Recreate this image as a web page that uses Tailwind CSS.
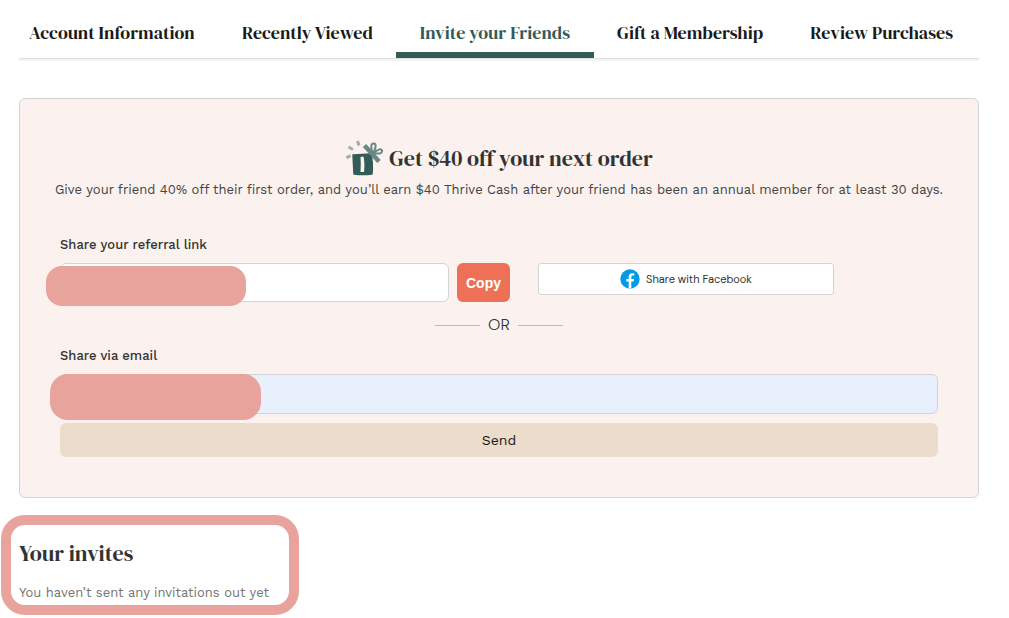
<!DOCTYPE html>
<html lang="en">
<head>
    <meta charset="UTF-8">
    <meta name="viewport" content="width=device-width, initial-scale=1.0">
    <title>Invite your Friends</title>
    <script src="https://cdn.jsdelivr.net/npm/@tailwindcss/browser@4"></script>
</head>
<body class="bg-white font-['Work_Sans','Inter',sans-serif] text-[#333333]">
    <div class="pl-[19px] pr-[30px]">
        <nav class="border-b border-[#e0e0e0] shadow-[0_2px_0_0_#f3f3f3]">
            <ul class="flex justify-between pl-[10px] pr-[26px] font-['DM_Serif_Display','Liberation_Serif',serif] text-lg text-[#1a1a1a] whitespace-nowrap">
                <li><a href="#" class="block pt-[19px] pb-[11px]">Account Information</a></li>
                <li><a href="#" class="block pt-[19px] pb-[11px]">Recently Viewed</a></li>
                <li class="-mx-6"><a href="#" aria-current="page" class="block px-6 pt-[19px] pb-[5px] border-b-6 border-[#335c58] text-[#335c58]">Invite your Friends</a></li>
                <li><a href="#" class="block pt-[19px] pb-[11px]">Gift a Membership</a></li>
                <li><a href="#" class="block pt-[19px] pb-[11px]">Review Purchases</a></li>
            </ul>
        </nav>

        <main>
            <section class="mt-[39px] p-10 border border-[#d3d3d3] rounded-md bg-[#fbf2ef]">
                <div class="flex items-center justify-center gap-[6px]">
                    <!-- gift box -->
                    <svg class="w-[38px] h-[38px]" viewBox="0 0 38 38" fill="none" aria-hidden="true">
                        <path d="M8 16 L26 15 Q28 24 27 35 Q18 36 9 35 Z" fill="#335c58" stroke="#335c58" stroke-width="1.5" stroke-linejoin="round"/>
                        <path d="M15.5 18 L18.5 17.5 Q20 24 19 33 L15.5 33 Q16 24 15.5 18 Z" fill="#fbf2ef"/>
                        <path d="M19.5 6.5 L34 22.5" stroke="#6b8783" stroke-width="4.5"/>
                        <path d="M27.5 14 Q24.5 4 29 4.5 Q32.5 5 28.5 14 Q36 8 37 11.5 Q37.5 16 28.5 14" stroke="#6b8783" stroke-width="2"/>
                        <path d="M12.5 2 L14 6.5 M3.5 8 L8 10.5 M1.5 19 L5.5 16.5" stroke="#9fafaa" stroke-width="3"/>
                    </svg>
                    <h1 class="font-['DM_Serif_Display','Liberation_Serif',serif] text-[22px]">Get $40 off your next order</h1>
                </div>
                <p class="mt-[3px] -mx-2 text-center text-[13px] leading-5 text-[#444444]">Give your friend 40% off their first order, and you’ll earn $40 Thrive Cash after your friend has been an annual member for at least 30 days.</p>

                <label for="link" class="block mt-[35px] text-[13px] leading-5 font-medium">Share your referral link</label>
                <div class="mt-2 grid grid-cols-[9fr_8fr] items-start gap-7">
                    <div class="relative flex gap-2">
                        <input id="link" type="text" readonly class="min-w-0 flex-1 h-[39px] px-3 rounded-md border border-[#d3d3d3] bg-white text-sm">
                        <button type="button" class="w-[53px] h-[39px] rounded-md bg-[#ee7057] font-['Liberation_Sans',sans-serif] text-sm font-bold text-white">Copy</button>
                        <span class="absolute -left-[14px] top-[3px] w-[200px] h-10 rounded-2xl bg-[#e7a39c]"></span>
                    </div>
                    <button type="button" class="flex items-center justify-center gap-[6px] w-[296px] h-8 rounded-[3px] border border-[#d3d3d3] bg-white font-['DM_Sans','Inter',sans-serif] text-[11px]">
                        <svg class="w-5 h-5" viewBox="0 0 20 20" aria-hidden="true">
                            <circle cx="10" cy="10" r="9.7" fill="#039be5"/>
                            <path d="M11.3 12.5 H13.7 L14.1 10 H11.3 V8.6 C11.3 7.5 11.7 6.6 12.7 6.6 H14.3 V4.4 C14 4.3 13.4 4.2 12.3 4.2 C10 4.2 8.7 5.4 8.7 8.2 V10 H6.3 V12.5 H8.7 V19.6 H11.3 Z" fill="#fff"/>
                        </svg>
                        Share with Facebook
                    </button>
                </div>

                <div class="mt-[11px] flex items-center justify-center gap-2 font-['DM_Sans','Inter',sans-serif] text-base font-light">
                    <span class="w-[45px] border-t border-[#bdbdbd]"></span>
                    OR
                    <span class="w-[45px] border-t border-[#bdbdbd]"></span>
                </div>

                <label for="email" class="block mt-[9px] text-[13px] leading-5 font-medium">Share via email</label>
                <div class="relative mt-2">
                    <input id="email" type="email" class="block w-full h-10 px-3 rounded-md border border-[#d3d3d3] bg-[#e8f0fe] text-sm">
                    <span class="absolute -left-[10px] top-0 w-[211px] h-[46px] rounded-[18px] bg-[#e7a39c]"></span>
                </div>
                <button type="submit" class="mt-[9px] block w-full h-[34px] rounded-md bg-[#ecdccb] text-sm text-[#1a1a1a]">Send</button>
            </section>

            <section class="-ml-[18px] mt-[17px] w-[298px] h-[100px] px-2 pt-3 border-10 border-[#e7a39c] rounded-3xl whitespace-nowrap">
                <h2 class="font-['DM_Serif_Display','Liberation_Serif',serif] text-[22px] leading-8">Your invites</h2>
                <p class="mt-[14px] text-[13px] leading-5 text-[#757575]">You haven’t sent any invitations out yet</p>
            </section>
        </main>
    </div>
</body>
</html>
